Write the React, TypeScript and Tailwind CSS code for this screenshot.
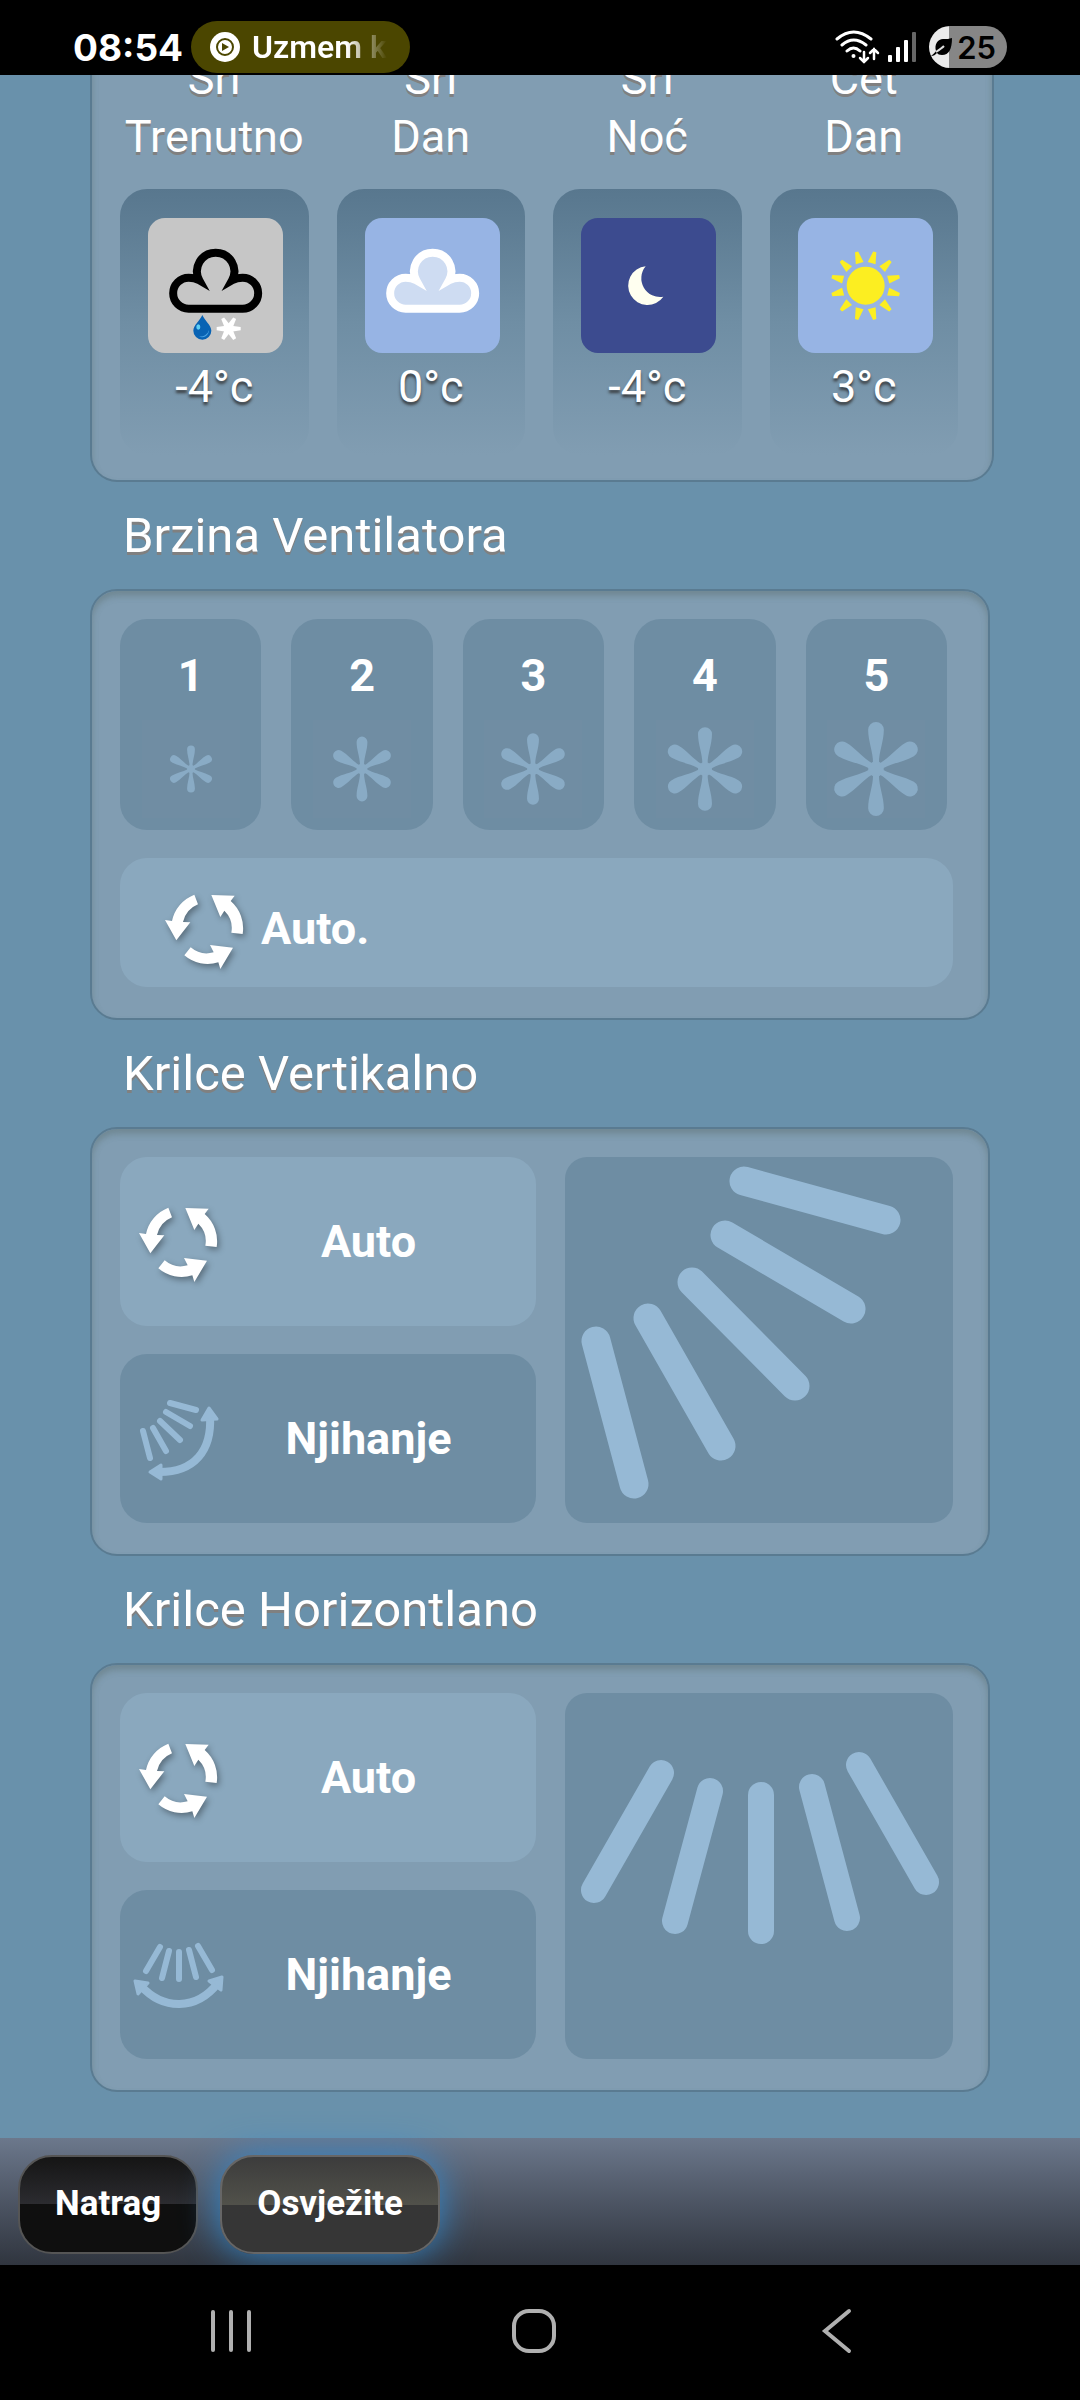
import type { ReactNode } from "react";
import clsx from "clsx";

type Line = [number, number, number, number];

const CLOUD =
	"M122 272A46.5 46.5 0 0 1 122 179Q140 179 154 187A56 56 0 1 1 252 187Q266 179 284 179A46.5 46.5 0 0 1 284 272Z";

const PETAL = "M-3 -6C-3 -18 -8 -28 -8 -40A8 8 0 0 1 8 -40C8 -28 3 -18 3 -6Z";

const forecast = [
	{ day: "Sri", part: "Trenutno", temp: "-4°c", bg: "bg-[#c6c6c6]", icon: <SleetIcon /> },
	{ day: "Sri", part: "Dan", temp: "0°c", bg: "bg-[#97b4e4]", icon: <CloudIcon /> },
	{ day: "Sri", part: "Noć", temp: "-4°c", bg: "bg-[#3c4b8f]", icon: <MoonIcon /> },
	{ day: "Čet", part: "Dan", temp: "3°c", bg: "bg-[#97b4e4]", icon: <SunIcon /> },
];

const fanSpeeds = [
	{ level: 1, scale: 0.5 },
	{ level: 2, scale: 0.69 },
	{ level: 3, scale: 0.76 },
	{ level: 4, scale: 0.89 },
	{ level: 5, scale: 1 },
];

const verticalVanes: Line[] = [
	[179, 24, 321, 63],
	[160, 78, 286, 152],
	[127, 125, 230, 229],
	[83, 161, 156, 289],
	[31, 184, 69, 327],
];

const horizontalVanes: Line[] = [
	[96, 80, 29, 197],
	[145, 98, 110, 228],
	[196, 102, 196, 238],
	[247, 94, 282, 225],
	[294, 72, 361, 189],
];

function SleetIcon() {
	return (
		<svg viewBox="0 0 405 405" className="size-full" aria-hidden="true">
			<path d={CLOUD} fill="none" stroke="#000" strokeWidth="24" />
			<path
				d="M163 291C170 308 190 322 190 338A27 27 0 0 1 136 338C136 322 156 308 163 291Z"
				fill="#0863b4"
			/>
			<path d="M183 336A21 21 0 0 1 152 355A26 26 0 0 0 183 336Z" fill="#4aa3e4" />
			<ellipse cx="151" cy="327" rx="6" ry="8" fill="#5fd0f5" />
			<g transform="translate(242 332)" fill="#fff">
				{[30, 90, 150, 210, 270, 330].map((a) => (
					<path key={a} d="M-9 -8L-5 -36L5 -36L9 -8L0 0Z" transform={`rotate(${a})`} />
				))}
				<circle r="14" />
			</g>
		</svg>
	);
}

function CloudIcon() {
	return (
		<svg viewBox="0 0 405 405" className="size-full" aria-hidden="true">
			<path d={CLOUD} fill="#cedcf2" stroke="#fff" strokeWidth="24" />
		</svg>
	);
}

function MoonIcon() {
	return (
		<svg viewBox="0 0 405 405" className="size-full" aria-hidden="true">
			<path d="M194 145A58 58 0 1 0 247 236A56 56 0 0 1 194 145Z" fill="#fffff0" />
		</svg>
	);
}

function SunIcon() {
	return (
		<svg viewBox="0 0 405 405" className="size-full" aria-hidden="true">
			<g transform="translate(203 203)" fill="#fcee21">
				<circle r="57" />
				{Array.from({ length: 12 }, (_, i) => (
					<path
						key={i}
						d="M-12 -70L-5 -105L5 -105L12 -70Z"
						transform={`rotate(${15 + i * 30})`}
					/>
				))}
			</g>
		</svg>
	);
}

function FanIcon({ scale }: { scale: number }) {
	return (
		<svg
			viewBox="-50 -50 100 100"
			className="mt-[15px] size-[98px] bg-[#708da3] text-[#89abc5]"
			aria-hidden="true"
		>
			<g transform={`scale(${scale})`} fill="currentColor">
				<circle r="8" />
				{[0, 60, 120, 180, 240, 300].map((a) => (
					<path key={a} d={PETAL} transform={`rotate(${a})`} />
				))}
			</g>
		</svg>
	);
}

function AutoIcon() {
	return (
		<svg
			viewBox="0 -20 234 243"
			className="h-[81px] w-[78px] overflow-visible drop-shadow-[2px_3px_3px_rgba(0,0,0,0.35)]"
			fill="#fff"
			aria-hidden="true"
		>
			<path d="M88 0L99 29A76 76 0 0 0 54 82L76 83L34 137L0 76L21 79A108 108 0 0 1 88 0Z" />
			<path d="M139 1L209 3L197 19A108 108 0 0 1 233 118L199 114A74 74 0 0 0 178 48L166 67Z" />
			<path d="M77 158L58 182A107 107 0 0 0 160 203L166 223L204 159L135 151L146 173A75 75 0 0 1 77 158Z" />
		</svg>
	);
}

function SwingVerticalIcon() {
	return (
		<svg
			viewBox="17 42 83 85"
			className="h-[85px] w-[83px] overflow-visible text-[#96b9d5]"
			stroke="currentColor"
			strokeLinecap="round"
			strokeLinejoin="round"
			aria-hidden="true"
		>
			<path
				d="M51 49L77 56M47 58L71 72M41 67L61 86M34 74L47 97M24 77L31 104"
				strokeWidth="6"
			/>
			<path d="M91 62C93 96 76 119 38 118" fill="none" strokeWidth="8" />
			<path
				d="M90 54L83 66L98 65Z M31 118L42 111L42 125Z"
				fill="currentColor"
				strokeWidth="3"
			/>
		</svg>
	);
}

function SwingHorizontalIcon() {
	return (
		<svg
			viewBox="10 49 97 72"
			className="h-[72px] w-[97px] overflow-visible text-[#96b9d5]"
			stroke="currentColor"
			strokeLinecap="round"
			strokeLinejoin="round"
			aria-hidden="true"
		>
			<path
				d="M41 57L27 81M50 61L43 88M60 62L60 89M70 60L77 87M79 56L93 80"
				strokeWidth="6"
			/>
			<path d="M22 96C44 120 77 121 99 93" fill="none" strokeWidth="8" />
			<path
				d="M16 91L29 93L19 104Z M103 87L90 91L102 100Z"
				fill="currentColor"
				strokeWidth="3"
			/>
		</svg>
	);
}

function Vanes({ lines, width, label }: { lines: Line[]; width: number; label: string }) {
	return (
		<button
			type="button"
			aria-label={label}
			className="flex flex-[388] rounded-[22px] bg-[#6e8da3]"
		>
			<svg
				viewBox="0 0 388 366"
				className="w-full"
				stroke="#96b9d5"
				strokeWidth={width}
				strokeLinecap="round"
				aria-hidden="true"
			>
				{lines.map(([x1, y1, x2, y2]) => (
					<line key={x1} x1={x1} y1={y1} x2={x2} y2={y2} />
				))}
			</svg>
		</button>
	);
}

function Panel({ title, children }: { title: string; children: ReactNode }) {
	return (
		<section className="mx-[90px]">
			<h2 className="px-[33px] pt-6 pb-[23px] text-[49px] leading-[60px] [text-shadow:0_3px_0_#808080]">
				{title}
			</h2>
			<div className="rounded-[27px] border-2 border-[#5a7b91] bg-[#819db2] pt-7 pr-[35px] pb-[31px] pl-7 shadow-[inset_0_5px_6px_rgba(90,110,110,0.45)]">
				{children}
			</div>
		</section>
	);
}

function ModeButton({
	label,
	icon,
	active = false,
}: {
	label: string;
	icon: ReactNode;
	active?: boolean;
}) {
	return (
		<button
			type="button"
			aria-pressed={active}
			className={clsx(
				"flex h-[169px] w-full items-center rounded-[27px] pr-[34px]",
				active ? "bg-[#8aa8be]" : "bg-[#6e8da3]",
			)}
		>
			<span className="flex w-[115px] justify-center">{icon}</span>
			<span className="flex-1 text-center">{label}</span>
		</button>
	);
}

function VanePanel({
	title,
	swingIcon,
	children,
}: {
	title: string;
	swingIcon: ReactNode;
	children: ReactNode;
}) {
	return (
		<Panel title={title}>
			<div className="flex gap-[29px] text-[45px] font-bold">
				<div className="flex flex-[416] flex-col gap-7">
					<ModeButton label="Auto" icon={<AutoIcon />} active />
					<ModeButton label="Njihanje" icon={swingIcon} />
				</div>
				{children}
			</div>
		</Panel>
	);
}

function StatusBar() {
	return (
		<header className="relative z-10 flex h-[75px] items-center bg-black pt-[19px] pr-[73px] pl-[73px] font-[Inter,sans-serif]">
			<time className="text-[37px] leading-none font-bold">08:54</time>
			<div className="ml-2 flex h-[52px] w-[219px] items-center gap-3 rounded-full bg-[#4b4600] pr-5 pl-[19px]">
				<svg viewBox="0 0 30 30" className="size-[30px] shrink-0" aria-hidden="true">
					<circle cx="15" cy="15" r="15" fill="#fff" />
					<circle cx="15" cy="15" r="8" fill="none" stroke="#4b4600" strokeWidth="2" />
					<path d="M12 11L19 15L12 19Z" fill="#4b4600" />
				</svg>
				<span className="overflow-hidden bg-linear-to-r from-white from-70% to-transparent bg-clip-text font-[Roboto,sans-serif] text-[32px] font-semibold whitespace-nowrap text-transparent">
					Uzmem k
				</span>
			</div>
			<div className="ml-auto flex items-center">
				<svg
					viewBox="0 0 45 34"
					className="h-[34px] w-[45px]"
					fill="none"
					stroke="#fff"
					strokeWidth="3"
					strokeLinecap="round"
					aria-hidden="true"
				>
					<path d="M2 9Q18.500 -5 36 9M7 15Q18.500 5 31 15M12 21Q18.500 15 25 21" />
					<circle cx="18.500" cy="26" r="2" fill="#fff" stroke="none" />
					<path d="M29 22V32M25 28L29 32L33 28M39 29V19M35 23L39 19L43 23" strokeWidth="2.500" />
				</svg>
				<svg viewBox="0 0 28 30" className="ml-2 h-[30px] w-7" aria-hidden="true">
					<rect x="0" y="23" width="4" height="7" rx="1" fill="#fff" />
					<rect x="8" y="15" width="4" height="15" rx="1" fill="#fff" />
					<rect x="16" y="8" width="4" height="22" rx="1" fill="#fff" />
					<rect x="24" y="0" width="4" height="30" rx="1" fill="#666" />
				</svg>
				<div className="ml-[13px] flex h-[42px] w-[78px] items-center justify-end gap-1 rounded-full bg-linear-to-r from-[#ebebeb] from-26% to-[#868686] to-26% pr-[11px] text-black">
					<svg viewBox="0 0 22 20" className="h-5 w-[22px]" aria-hidden="true">
						<path
							d="M21 1C21 12 18 18 11 18C8 18 7 17 6 16C4 18 3 19 0 19C2 17 4 16 5 14C3 7 7 2 12 2C16 2 18 2 21 1Z"
							fill="#000"
						/>
						<path d="M5 15C8 13 11 11 13 9" stroke="#ddd" strokeWidth="2" fill="none" />
					</svg>
					<span className="text-[31px] leading-none font-semibold">25</span>
				</div>
			</div>
		</header>
	);
}

function Forecast() {
	return (
		// scrolled up, so the top edge slides under the status bar
		<section className="-mt-7 mr-[86px] ml-[90px] grid grid-cols-4 gap-7 rounded-b-[27px] border-2 border-t-0 border-[#5a7b91] bg-[#819db2] pt-[3px] pr-[34px] pb-[25px] pl-7 text-center text-[45px] leading-[58px] shadow-[inset_0_5px_6px_rgba(90,110,110,0.45)]">
			{forecast.map(({ day, part, temp, bg, icon }) => (
				<div key={day + part}>
					<p className="[text-shadow:0_3px_0_#808080]">
						{day}
						<br />
						{part}
					</p>
					<div className="mt-[23px] h-[266px] rounded-[27px] bg-linear-to-b from-[#58778e] via-[#6f8ea4] to-[#819db2] pt-[29px]">
						<div className={clsx("ml-7 size-[135px] overflow-hidden rounded-[17px]", bg)}>
							{icon}
						</div>
						<p className="mt-[5px] [text-shadow:0_3px_3px_rgba(50,50,50,0.9)]">{temp}</p>
					</div>
				</div>
			))}
		</section>
	);
}

function App() {
	return (
		<div className="flex min-h-screen flex-col bg-[#6991ab] font-[Roboto,sans-serif] text-white">
			<StatusBar />

			<main className="flex-1 pb-10">
				<Forecast />

				<Panel title="Brzina Ventilatora">
					<div className="mr-[6px] grid grid-cols-5 gap-[30px]">
						{fanSpeeds.map(({ level, scale }) => (
							<button
								key={level}
								type="button"
								className="flex h-[211px] flex-col items-center rounded-[27px] bg-[#6e8da3] pt-7 text-[45px] leading-[58px] font-bold"
							>
								{level}
								<FanIcon scale={scale} />
							</button>
						))}
					</div>
					<button
						type="button"
						aria-pressed="true"
						className="mt-7 flex h-[129px] w-full items-center gap-[18px] rounded-[27px] bg-[#8aa8be] pt-3 pl-[45px] text-[45px] font-bold"
					>
						<AutoIcon />
						Auto.
					</button>
				</Panel>

				<VanePanel title="Krilce Vertikalno" swingIcon={<SwingVerticalIcon />}>
					<Vanes lines={verticalVanes} width={29} label="Krilce Vertikalno" />
				</VanePanel>

				<VanePanel title="Krilce Horizontlano" swingIcon={<SwingHorizontalIcon />}>
					<Vanes lines={horizontalVanes} width={26} label="Krilce Horizontlano" />
				</VanePanel>
			</main>

			<footer className="flex h-[127px] items-center gap-[22px] bg-linear-to-b from-[#6c788c] to-[#30353f] pt-[6px] pl-[18px] text-[35px] font-bold [text-shadow:0_3px_0_#444]">
				<button
					type="button"
					className="h-[99px] rounded-[34px] border-2 border-[#555] bg-[linear-gradient(#151515,#2c2c30_50%,#0f0f0f_50%)] px-[35px]"
				>
					Natrag
				</button>
				<button
					type="button"
					className="h-[99px] rounded-[34px] border-2 border-[#666] bg-[linear-gradient(#3c3c3c,#51514a_50%,#363636_50%)] px-[35px] shadow-[0_0_36px_#3388cc]"
				>
					Osvježite
				</button>
			</footer>

			<nav className="grid h-[135px] grid-cols-3 items-center justify-items-center bg-black pr-[92px] pb-1 pl-20">
				<button type="button" aria-label="Recents">
					<svg viewBox="0 0 46 46" className="size-[46px]" stroke="#b0b0b0" strokeWidth="4" strokeLinecap="round">
						<path d="M5 4V42M23 4V42M41 4V42" />
					</svg>
				</button>
				<button type="button" aria-label="Home">
					<svg viewBox="0 0 46 46" className="size-[46px]" fill="none" stroke="#b0b0b0" strokeWidth="4">
						<rect x="3" y="3" width="40" height="40" rx="15" />
					</svg>
				</button>
				<button type="button" aria-label="Back">
					<svg viewBox="0 0 46 46" className="size-[46px]" fill="none" stroke="#b0b0b0" strokeWidth="4" strokeLinecap="round">
						<path d="M35 3L11 23L35 43" />
					</svg>
				</button>
			</nav>
		</div>
	);
}

export default App;
